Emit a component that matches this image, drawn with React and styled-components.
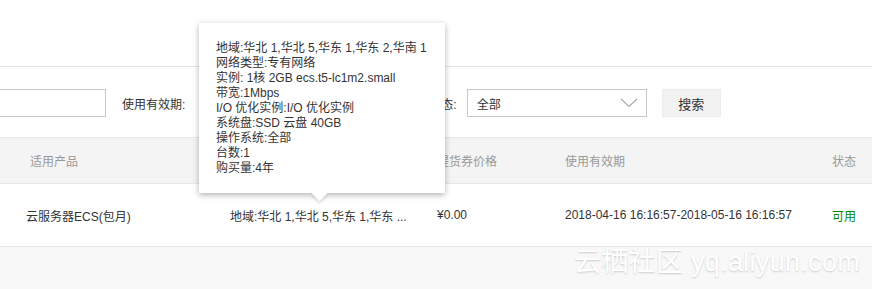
import React from "react"
import styled, { createGlobalStyle } from "styled-components"

const details = [
  "地域:华北 1,华北 5,华东 1,华东 2,华南 1",
  "网络类型:专有网络",
  "实例: 1核 2GB ecs.t5-lc1m2.small",
  "带宽:1Mbps",
  "I/O 优化实例:I/O 优化实例",
  "系统盘:SSD 云盘 40GB",
  "操作系统:全部",
  "台数:1",
  "购买量:4年",
]

const columns = [
  { key: "p", head: "适用产品", cell: "云服务器ECS(包月)", headPad: 30, cellPad: 26 },
  { key: "s", head: "", cell: "地域:华北 1,华北 5,华东 1,华东 ...", headPad: 20, cellPad: 20 },
  { key: "v", head: "提货券价格", cell: "¥0.00", headPad: 0, cellPad: 0 },
  { key: "d", head: "使用有效期", cell: "2018-04-16 16:16:57-2018-05-16 16:16:57", headPad: 0, cellPad: 0 },
  { key: "t", head: "状态", cell: "可用", headPad: 0, cellPad: 0, ok: true },
]

const App = () => {
  return (
    <>
      <GlobalStyle />
      <Page>
        <TopBar />
        <Filters>
          <TextInput style={{ marginLeft: -94 }} />
          <Label $gap={18}>使用有效期:</Label>
          <TextInput $w={210} />
          <Label>状态:</Label>
          <Select>
            <span>全部</span>
            <svg width="18" height="10" viewBox="0 0 18 10">
              <path d="M1 1 L9 8.5 L17 1" fill="none" stroke="#a8a8a8" strokeWidth="1.1" />
            </svg>
          </Select>
          <Button>搜索</Button>
        </Filters>
        <Table>
          <HeadRow>
            {columns.map((c) => (
              <HeadCell key={c.key} $pad={c.headPad}>{c.head}</HeadCell>
            ))}
          </HeadRow>
          <BodyRow>
            {columns.map((c) => (
              <Cell key={c.key} $pad={c.cellPad} $ok={c.ok}>
                {c.cell}
              </Cell>
            ))}
          </BodyRow>
        </Table>
        <Footer>
          <Watermark>云栖社区 yq.aliyun.com</Watermark>
        </Footer>
        <Tooltip>
          {details.map((d) => (
            <div key={d}>{d}</div>
          ))}
          <Arrow />
        </Tooltip>
      </Page>
    </>
  )
}

const GlobalStyle = createGlobalStyle`
  body {
    margin: 0;
    background: #fff;
    font-family: "Liberation Sans", "Noto Sans CJK SC", sans-serif;
    font-size: 12px;
    color: #333;
  }
`

const Page = styled.div`
  position: relative;
  width: 872px;
  height: 289px;
  overflow: hidden;
`

const TopBar = styled.div`
  height: 66px;
  border-bottom: 1px solid #e3e3e3;
`

const Filters = styled.div`
  display: flex;
  align-items: center;
  height: 28px;
  margin-top: 22px;
`

const TextInput = styled.div`
  box-sizing: border-box;
  width: ${(p) => p.$w || 200}px;
  height: 28px;
  border: 1px solid #c8c8c8;
  margin-right: 16px;
`

const Label = styled.span`
  margin-right: ${(p) => p.$gap || 10}px;
  color: #333;
`

const Select = styled.div`
  box-sizing: border-box;
  display: flex;
  align-items: center;
  justify-content: space-between;
  width: 180px;
  height: 28px;
  padding: 0 8px 0 9px;
  border: 1px solid #c8c8c8;
  margin-right: 15px;
`

const Button = styled.div`
  box-sizing: border-box;
  display: flex;
  align-items: center;
  justify-content: center;
  width: 59px;
  height: 28px;
  background: #f2f2f2;
  border: 1px solid #ececec;
  color: #333;
  font-size: 13px;
`

const Table = styled.div`
  margin-top: 20px;
`

const Row = styled.div`
  display: grid;
  grid-template-columns: 210px 227px 128px 267px 1fr;
  align-items: center;
`

const HeadRow = styled(Row)`
  height: 45px;
  background: #f4f4f4;
  border-top: 1px solid #e8e8e8;
  border-bottom: 1px solid #e8e8e8;
  color: #999;
`

const BodyRow = styled(Row)`
  height: 62px;
`

const HeadCell = styled.div`
  padding-left: ${(p) => p.$pad}px;
`

const Cell = styled.div`
  padding-left: ${(p) => p.$pad}px;
  color: ${(p) => (p.$ok ? "#008a00" : "#333")};
  white-space: nowrap;
`

const Footer = styled.div`
  height: 44px;
  background: #f8f8f8;
  border-top: 1px solid #e6e6e6;
  display: flex;
  justify-content: flex-end;
  padding-right: 12px;
`

const Watermark = styled.div`
  font-size: 27px;
  line-height: 30px;
  color: #fff;
  text-shadow: 0 1px 2px rgba(0, 0, 0, 0.18);
  letter-spacing: 0.3px;
`

const Tooltip = styled.div`
  position: absolute;
  left: 199px;
  top: 23px;
  box-sizing: border-box;
  width: 246px;
  height: 170px;
  padding: 18px 0 0 17px;
  background: #fff;
  line-height: 15px;
  color: #333;
  box-shadow: 0 2px 6px rgba(0, 0, 0, 0.3);
`

const Arrow = styled.div`
  position: absolute;
  left: 115px;
  bottom: -6px;
  width: 11px;
  height: 11px;
  background: #fff;
  transform: rotate(45deg);
  box-shadow: 2px 2px 3px rgba(0, 0, 0, 0.12);
`

export default App
